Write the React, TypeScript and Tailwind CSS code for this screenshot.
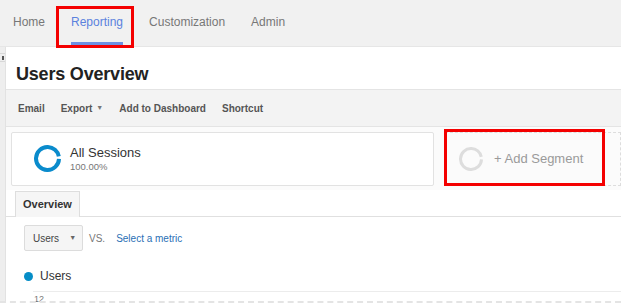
/**
 * Users Overview screen
 * Top nav, report header, segment picker and chart header
 */

const navItems = ['Home', 'Reporting', 'Customization', 'Admin'];
const actions = ['Email', 'Export', 'Add to Dashboard', 'Shortcut'];

const Ring = ({ color, width, size }: { color: string; width: number; size: number }) => {
  const r = (size - width) / 2;
  const c = 2 * Math.PI * r;
  return (
    <svg width={size} height={size} viewBox={`0 0 ${size} ${size}`}>
      <circle
        cx={size / 2}
        cy={size / 2}
        r={r}
        fill="none"
        stroke={color}
        strokeWidth={width}
        strokeDasharray={`${c - 3} 3`}
        transform={`rotate(2 ${size / 2} ${size / 2})`}
      />
    </svg>
  );
};

export default function App() {
  return (
    <div className="relative w-[621px] h-[303px] overflow-hidden bg-white font-['Liberation_Sans',Arial,sans-serif]">
      {/* top navigation */}
      <div className="h-[47px] bg-[#f1f1f1] border-b border-[#e6e6e6] flex items-stretch pl-[13px] gap-[26px]">
        {navItems.map((item) => (
          <div
            key={item}
            className={
              item === 'Reporting'
                ? 'flex items-start pt-[13px] text-[12px] text-[#5b82de] border-b-[3px] border-[#6d90e3] -mb-[4px] h-[45px]'
                : 'flex items-start pt-[13px] text-[12px] text-[#777]'
            }
          >
            {item}
          </div>
        ))}
      </div>

      <div className="flex">
        {/* left collapse strip */}
        <div className="w-[6px] shrink-0 bg-[#eeeeee] border-r border-[#e2e2e2] h-[256px] flex flex-col">
          <div className="mt-[6px] h-[9px] border-y border-[#d8d8d8] flex items-center justify-center">
            <div className="w-[2px] h-[4px] bg-[#555]" />
          </div>
        </div>

        <div className="flex-1 flex flex-col">
          {/* title */}
          <div className="h-[42px] flex items-center pl-[10px] pt-[12px]">
            <h1 className="text-[18px] font-bold text-[#222] tracking-[-0.2px]">Users Overview</h1>
          </div>

          {/* toolbar */}
          <div className="h-[38px] bg-[#f3f3f3] border-y border-[#e4e4e4] flex items-center pl-[12px] pt-[1px] gap-[16px] text-[10px] font-bold text-[#555]">
            {actions.map((a) => (
              <span key={a} className="flex items-center gap-[4px]">
                {a}
                {a === 'Export' && <span className="text-[7px] text-[#777]">▼</span>}
              </span>
            ))}
          </div>

          {/* segments */}
          <div className="h-[63px] flex items-center pl-[5px] pr-0 gap-[11px] bg-[#fbfbfb]">
            <div className="w-[423px] h-[54px] bg-white border border-[#e2e2e2] rounded-[2px] flex items-center pl-[22px] gap-[9px]">
              <Ring color="#0a8bcc" width={4} size={27} />
              <div className="flex flex-col -mt-[1px]">
                <span className="text-[13px] text-[#333] leading-[16px]">All Sessions</span>
                <span className="text-[9.5px] text-[#777] leading-[11px]">100.00%</span>
              </div>
            </div>
            <div className="flex-1 h-[54px] border border-dashed border-[#dddddd] flex items-center pl-[13px] gap-[11px]">
              <Ring color="#dddddd" width={3} size={24} />
              <span className="text-[13px] text-[#9a9a9a]">+ Add Segment</span>
            </div>
          </div>

          {/* tabs */}
          <div className="h-[27px] flex items-end pl-[9px] border-b border-[#e0e0e0]">
            <div className="h-[26px] px-[7px] bg-[#f6f6f6] border border-b-0 border-[#dedede] flex items-center text-[11px] font-bold text-[#333] -mb-px">
              Overview
            </div>
          </div>

          {/* metric chooser */}
          <div className="flex items-center pl-[18px] pt-[8px] gap-[6px]">
            <div className="w-[59px] h-[26px] bg-[#f5f5f5] border border-[#dcdcdc] rounded-[2px] flex items-center pl-[8px] gap-[10px] text-[10px] text-[#444]">
              Users
              <span className="text-[7px] text-[#666]">▼</span>
            </div>
            <span className="text-[10px] text-[#777]">VS.</span>
            <span className="ml-[5px] text-[10px] text-[#2a6fb5]">Select a metric</span>
          </div>

          {/* legend */}
          <div className="flex items-center pl-[18px] pt-[16px] gap-[7px]">
            <div className="w-[9px] h-[9px] rounded-full bg-[#058dc7]" />
            <span className="text-[12px] text-[#333]">Users</span>
          </div>

          {/* chart axis top */}
          <div className="mt-[6px] ml-[27px] border-t border-[#ececec] pt-[2px] pl-[1px] text-[9px] text-[#777] leading-[10px]">
            12
          </div>
        </div>
      </div>

      {/* bottom dashed gridline */}
      <div className="absolute left-0 right-0 top-[301px] border-t-2 border-dashed border-[#e4e4e4]" />

      {/* annotation boxes */}
      <div className="absolute left-[56px] top-[6px] w-[78px] h-[42px] border-[3px] border-[#f40000]" />
      <div className="absolute left-[444px] top-[129px] w-[161px] h-[57px] border-[3px] border-[#f40000]" />
    </div>
  );
}
